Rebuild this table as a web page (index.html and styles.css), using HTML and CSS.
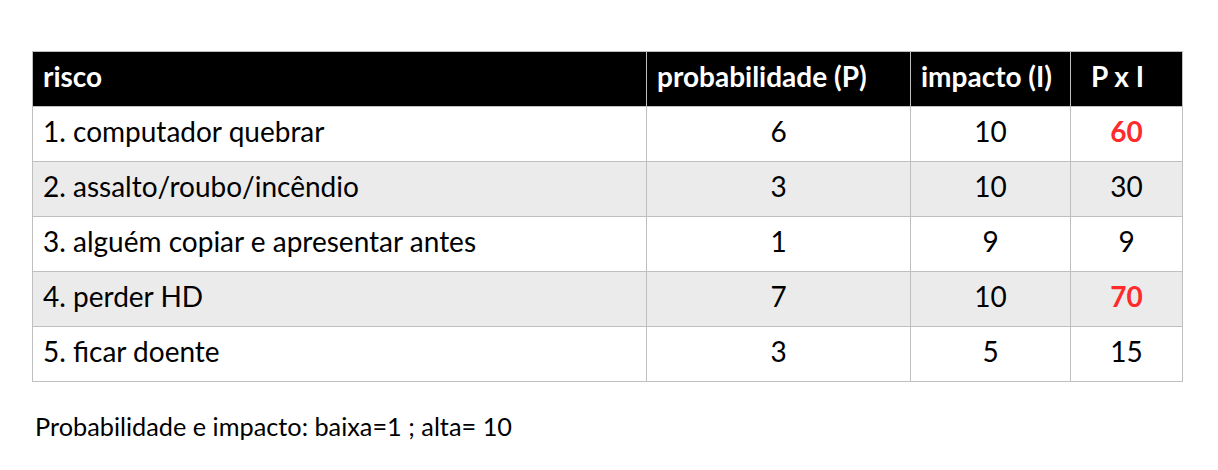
FILE: index.html
```html
<!DOCTYPE html>
<html lang="pt">
<head>
<meta charset="utf-8">
<link rel="stylesheet" href="styles.css">
</head>
<body>
<main class="page">
  <table class="risk">
    <colgroup>
      <col class="c1"><col class="c2"><col class="c3"><col class="c4">
    </colgroup>
    <thead>
      <tr>
        <th>risco</th>
        <th>probabilidade (P)</th>
        <th>impacto (I)</th>
        <th class="pxi">P x I</th>
      </tr>
    </thead>
    <tbody>
      <tr><td>1. computador quebrar</td><td class="n">6</td><td class="n">10</td><td class="n hot">60</td></tr>
      <tr class="alt"><td>2. assalto/roubo/incêndio</td><td class="n">3</td><td class="n">10</td><td class="n">30</td></tr>
      <tr><td>3. alguém copiar e apresentar antes</td><td class="n">1</td><td class="n">9</td><td class="n">9</td></tr>
      <tr class="alt"><td>4. perder HD</td><td class="n">7</td><td class="n">10</td><td class="n hot">70</td></tr>
      <tr><td>5. ficar doente</td><td class="n">3</td><td class="n">5</td><td class="n">15</td></tr>
    </tbody>
  </table>
  <p class="note">Probabilidade e impacto: baixa=1 ; alta= 10</p>
</main>
</body>
</html>
```
FILE: styles.css
```css
html, body {
  margin: 0;
  padding: 0;
  background: #ffffff;
}
body {
  font-family: Lato, "Open Sans", sans-serif;
  color: #000;
}
.page {
  padding: 51px 0 0 32px;
}
.risk {
  border-collapse: collapse;
  width: 1150px;
  table-layout: fixed;
  font-size: 28px;
}
.c1 { width: 614px; }
.c2 { width: 264px; }
.c3 { width: 160px; }
.c4 { width: 112px; }
.risk th, .risk td {
  border: 1px solid #bfbfbf;
  height: 55px;
  padding: 0 10px 6px;
  box-sizing: border-box;
  vertical-align: middle;
  white-space: nowrap;
  line-height: 1;
}
.risk th {
  background: #000;
  color: #fff;
  font-weight: 700;
  text-align: left;
}
.risk th.pxi {
  padding-left: 20px;
}
.risk tr.alt td {
  background: #ebebeb;
}
.risk td.n {
  text-align: center;
}
.risk td.hot {
  color: #ff2a2a;
  font-weight: 700;
}
.note {
  margin: 29px 0 0 3px;
  font-size: 25.3px;
  line-height: 1.2;
}
```
